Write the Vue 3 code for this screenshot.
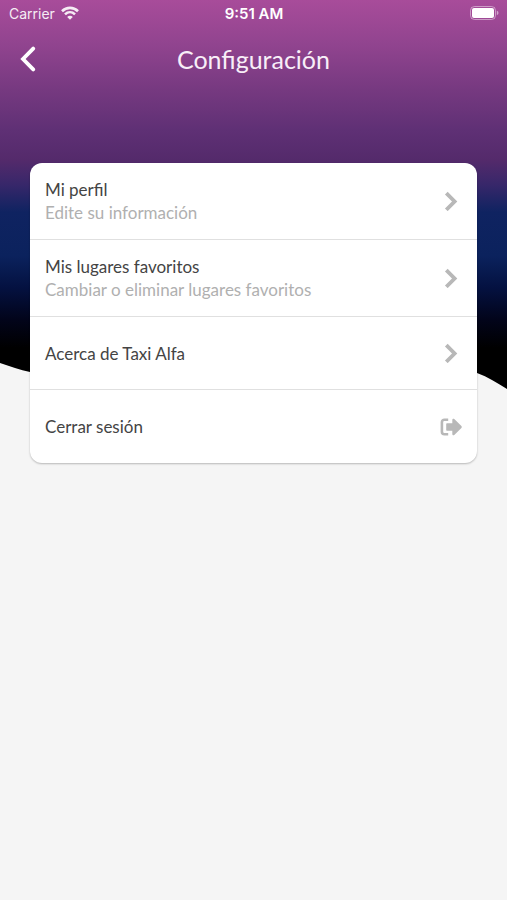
<script setup>
const items = [
  { id: 'perfil', title: 'Mi perfil', detail: 'Edite su información', icon: 'chevron' },
  { id: 'favoritos', title: 'Mis lugares favoritos', detail: 'Cambiar o eliminar lugares favoritos', icon: 'chevron' },
  { id: 'acerca', title: 'Acerca de Taxi Alfa', icon: 'chevron' },
  { id: 'salir', title: 'Cerrar sesión', icon: 'logout' }
]
</script>

<template>
  <div class="screen">
    <svg class="backdrop" viewBox="0 0 507 400" preserveAspectRatio="none" aria-hidden="true">
      <defs>
        <linearGradient id="sky" gradientUnits="userSpaceOnUse" x1="0" y1="0" x2="0" y2="400">
          <stop offset="0" stop-color="#a84c9a" />
          <stop offset="0.11" stop-color="#91448f" />
          <stop offset="0.225" stop-color="#763980" />
          <stop offset="0.325" stop-color="#5f3075" />
          <stop offset="0.4" stop-color="#542a6b" />
          <stop offset="0.46" stop-color="#38276a" />
          <stop offset="0.53" stop-color="#0f2361" />
          <stop offset="0.64" stop-color="#0b225d" />
          <stop offset="0.72" stop-color="#041140" />
          <stop offset="0.8" stop-color="#02041a" />
          <stop offset="0.87" stop-color="#000000" />
        </linearGradient>
      </defs>
      <path d="M0 0H507V389C497 383 488 377 477 373C400 344 330 345 250 366C170 386 100 388 30 372C20 370 10 366 0 363Z" fill="url(#sky)" />
    </svg>

    <div class="content">
      <div class="status">
        <div class="carrier">
          <span>Carrier</span>
          <svg width="18" height="14" viewBox="0 0 18 14" fill="none" stroke="#fff" stroke-width="2.6" aria-hidden="true">
            <path d="M1 5.2C5.6 0.7 12.4 0.7 17 5.2" />
            <path d="M4 8.4C6.9 5.6 11.1 5.6 14 8.4" />
            <path d="M9 13.8L6.2 11C7.8 9.4 10.2 9.4 11.8 11Z" fill="#fff" stroke="none" />
          </svg>
        </div>
        <span class="clock">9:51 AM</span>
        <svg class="battery" width="30" height="14" viewBox="0 0 30 14" aria-hidden="true">
          <rect x="1.5" y="0.5" width="25" height="13" rx="4" fill="none" stroke="#fff" stroke-opacity="0.45" />
          <rect x="3" y="2" width="22" height="10" rx="2" fill="#fff" />
          <path d="M27.8 4.8C30 5.4 30 8.6 27.8 9.2Z" fill="#fff" fill-opacity="0.5" />
        </svg>
      </div>

      <header class="navbar">
        <button type="button" class="back" aria-label="Volver">
          <svg width="16" height="26" viewBox="0 0 16 26" fill="none" stroke="#fff" stroke-width="3.8" stroke-linecap="round" stroke-linejoin="miter" aria-hidden="true">
            <path d="M13.2 2.6L3 13L13.2 23.4" />
          </svg>
        </button>
        <h1>Configuración</h1>
      </header>

      <main class="card">
        <button v-for="item in items" :key="item.id" type="button" class="row">
          <span class="text">
            <span class="title">{{ item.title }}</span>
            <span v-if="item.detail" class="detail">{{ item.detail }}</span>
          </span>
          <span class="icon">
            <svg v-if="item.icon === 'chevron'" width="22" height="20" viewBox="0 0 22 20" fill="none" stroke="#b8b8b8" stroke-width="3.8" aria-hidden="true">
              <path d="M6.3 2.2L14.6 10.5L6.3 18.8" />
            </svg>
            <svg v-else width="22" height="20" viewBox="0 0 22 20" aria-hidden="true">
              <path d="M8.2 2.7H4.4C2.9 2.7 1.9 3.7 1.9 5.2V14.8C1.9 16.3 2.9 17.3 4.4 17.3H8.2" fill="none" stroke="#b8b8b8" stroke-width="2.6" />
              <path d="M6.2 7.2C6.2 6.6 6.6 6.2 7.2 6.2H12.3V2.9C12.3 1.8 13.5 1.3 14.3 2L21.4 9.1C21.9 9.6 21.9 10.4 21.4 10.9L14.3 18C13.5 18.7 12.3 18.2 12.3 17.1V13.8H7.2C6.6 13.8 6.2 13.4 6.2 12.8Z" fill="#b8b8b8" />
            </svg>
          </span>
        </button>
      </main>
    </div>
  </div>
</template>

<style>
body { background: #f5f5f5; }
</style>

<style scoped>
.screen {
  display: grid;
  min-height: 100vh;
  grid-template-columns: minmax(0, 1fr);
  align-items: start;
  background: #f5f5f5;
  font-family: Lato, sans-serif;
}
/* both layers share the one grid cell */
.backdrop, .content { grid-area: 1 / 1; }
.backdrop { display: block; width: 100%; height: 400px; }
.status {
  display: grid;
  grid-template-columns: 1fr auto 1fr;
  align-items: center;
  height: 26px;
  padding: 0 8px 0 9px;
  color: #fff;
  font-family: Inter, sans-serif;
  font-size: 14px;
}
.carrier { display: flex; align-items: center; gap: 6px; opacity: 0.9; }
.clock { font-size: 15px; font-weight: 600; }
.battery { justify-self: end; }
.navbar {
  display: grid;
  grid-template-columns: 48px 1fr 48px;
  align-items: center;
  height: 66px;
  padding: 0 4px;
}
.back {
  display: flex;
  align-items: center;
  justify-content: center;
  height: 48px;
  padding: 0;
  border: 0;
  background: none;
  cursor: pointer;
}
h1 {
  margin: 0;
  color: #f8eef8;
  font-size: 25px;
  font-weight: 400;
  line-height: 32px;
  text-align: center;
}
.card {
  margin: 71px 30px 40px;
  overflow: hidden;
  border-radius: 12px;
  background: #fff;
  box-shadow: 0 1px 2px rgba(0, 0, 0, 0.25);
}
.row {
  display: flex;
  align-items: center;
  justify-content: space-between;
  gap: 16px;
  width: 100%;
  min-height: 73px;
  padding: 15px;
  border: 0;
  border-bottom: 1px solid #e0e0e0;
  background: none;
  font-family: inherit;
  text-align: left;
  cursor: pointer;
}
.row:last-child { border-bottom: 0; }
.text { display: flex; flex-direction: column; font-size: 17px; line-height: 23px; }
.title { color: #444; }
.detail { color: #b0b0b0; }
.icon { display: flex; flex: none; }
</style>
